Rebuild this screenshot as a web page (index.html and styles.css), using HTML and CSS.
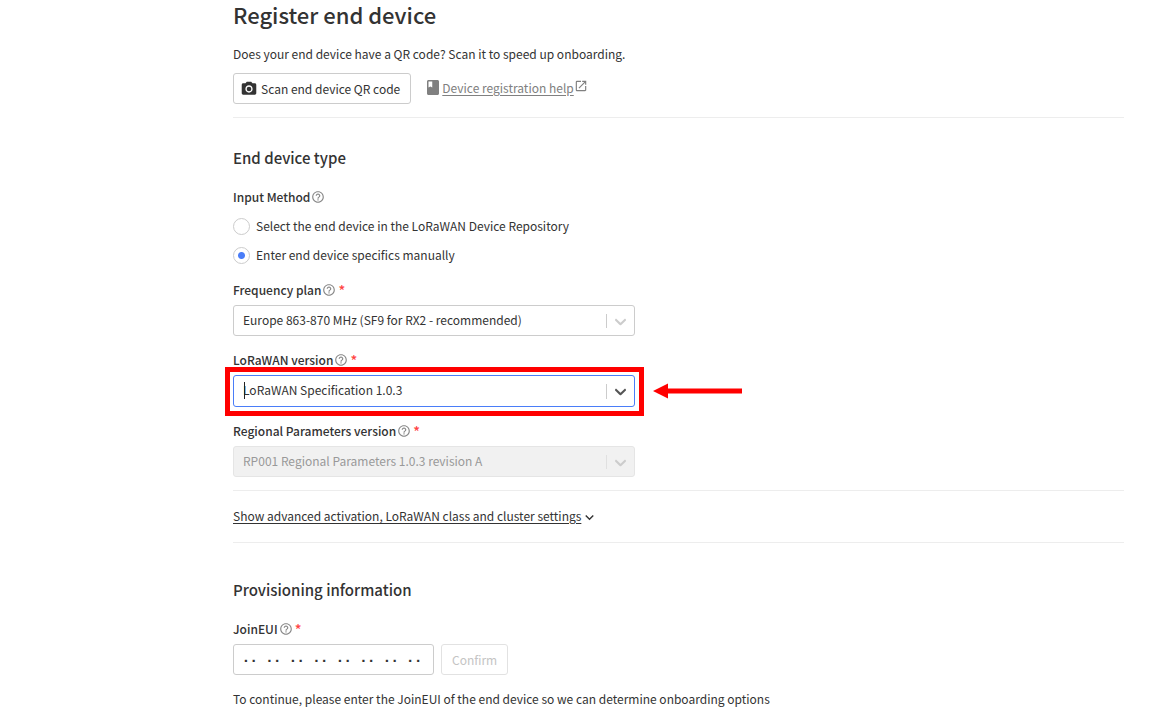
FILE: index.html
```
<!DOCTYPE html>
<html lang="en">
<head>
<meta charset="utf-8">
<title>Register end device</title>
<link rel="stylesheet" href="styles.css">
</head>
<body>
<svg class="defs" aria-hidden="true">
  <symbol id="help" viewBox="0 0 24 24"><path d="M11 18h2v-2h-2v2zm1-16C6.480 2 2 6.480 2 12s4.480 10 10 10 10-4.480 10-10S17.520 2 12 2zm0 18c-4.410 0-8-3.590-8-8s3.590-8 8-8 8 3.590 8 8-3.590 8-8 8zm0-14c-2.210 0-4 1.790-4 4h2c0-1.100.9-2 2-2s2 .9 2 2c0 2-3 1.750-3 5h2c0-2.250 3-2.500 3-5 0-2.210-1.790-4-4-4z"/></symbol>
  <symbol id="chevron" viewBox="0 0 20 20"><path d="M4.516 7.548c.436-.446 1.043-.481 1.576 0L10 11.295l3.908-3.747c.533-.481 1.141-.446 1.574 0 .436.445.408 1.197 0 1.615-.406.418-4.695 4.502-4.695 4.502a1.095 1.095 0 0 1-1.576 0S4.924 9.581 4.516 9.163s-.436-1.170 0-1.615z"/></symbol>
</svg>
<main class="page">
  <header class="intro">
    <h1 class="title">Register end device</h1>
    <p class="text">Does your end device have a QR code? Scan it to speed up onboarding.</p>
    <div class="actions">
      <button class="button" type="button">
        <svg class="icon-camera" viewBox="1 1 22 22" aria-hidden="true"><circle cx="12" cy="12" r="3.200"/><path d="M9 2 7.170 4H4c-1.100 0-2 .9-2 2v12c0 1.100.9 2 2 2h16c1.100 0 2-.9 2-2V6c0-1.100-.9-2-2-2h-3.170L15 2H9zm3 15c-2.760 0-5-2.240-5-5s2.240-5 5-5 5 2.240 5 5-2.240 5-5 5z"/></svg>
        Scan end device QR code
      </button>
      <span class="help-link">
        <svg class="icon-book" viewBox="4 2 16 20" aria-hidden="true"><path d="M18 2H6c-1.100 0-2 .9-2 2v16c0 1.100.9 2 2 2h12c1.100 0 2-.9 2-2V4c0-1.100-.9-2-2-2zM6 4h5v8l-2.500-1.500L6 12V4z"/></svg>
        <a href="#help">Device registration help</a>
        <svg class="icon-external" viewBox="0 0 24 24" aria-hidden="true"><path d="M19 19H5V5h7V3H5a2 2 0 0 0-2 2v14a2 2 0 0 0 2 2h14c1.100 0 2-.9 2-2v-7h-2v7zM14 3v2h3.590l-9.830 9.830 1.410 1.410L19 6.410V10h2V3h-7z"/></svg>
      </span>
    </div>
  </header>

  <form class="form">
    <section class="section">
      <h2 class="heading">End device type</h2>
      <fieldset class="radios">
        <legend class="label">Input Method<svg class="icon-help"><use href="#help"/></svg></legend>
        <label class="radio"><input type="radio" name="method">Select the end device in the LoRaWAN Device Repository</label>
        <label class="radio"><input type="radio" name="method" checked>Enter end device specifics manually</label>
      </fieldset>
      <div class="field">
        <label class="label" for="plan">Frequency plan<svg class="icon-help"><use href="#help"/></svg><span class="required">*</span></label>
        <div class="select">
          <select id="plan"><option>Europe 863-870 MHz (SF9 for RX2 - recommended)</option></select>
          <span class="indicator"><svg><use href="#chevron"/></svg></span>
        </div>
      </div>
      <div class="field">
        <label class="label" for="version">LoRaWAN version<svg class="icon-help"><use href="#help"/></svg><span class="required">*</span></label>
        <div class="select select-active">
          <select id="version"><option>LoRaWAN Specification 1.0.3</option></select>
          <span class="caret"></span>
          <span class="indicator"><svg><use href="#chevron"/></svg></span>
          <span class="highlight"></span>
          <svg class="arrow" viewBox="0 0 89 16" aria-hidden="true"><path d="M0 8 15 0.500V5.500H89V10.500H15V15.500z"/></svg>
        </div>
      </div>
      <div class="field">
        <label class="label" for="params">Regional Parameters version<svg class="icon-help"><use href="#help"/></svg><span class="required">*</span></label>
        <div class="select select-disabled">
          <select id="params" disabled><option>RP001 Regional Parameters 1.0.3 revision A</option></select>
          <span class="indicator"><svg><use href="#chevron"/></svg></span>
        </div>
      </div>
    </section>
    <div class="advanced">
      <button class="toggle" type="button"><span class="toggle-text">Show advanced activation, LoRaWAN class and cluster settings</span><svg class="icon-expand" viewBox="0 0 24 24" aria-hidden="true"><path d="M16.590 8.590 12 13.170 7.410 8.590 6 10l6 6 6-6z"/></svg></button>
    </div>
    <section class="section section-provisioning">
      <h2 class="heading">Provisioning information</h2>
      <div class="field">
        <label class="label" for="eui">JoinEUI<svg class="icon-help"><use href="#help"/></svg><span class="required">*</span></label>
        <div class="eui-row">
          <input class="eui" id="eui" type="text" value="·· ·· ·· ·· ·· ·· ·· ··">
          <button class="button" type="button" disabled>Confirm</button>
        </div>
      </div>
      <p class="text">To continue, please enter the JoinEUI of the end device so we can determine onboarding options</p>
    </section>
  </form>
</main>
</body>
</html>
```
FILE: styles.css
```
* { box-sizing: border-box; }
body {
  margin: 0;
  background: #fff;
  color: #333;
  font-family: "Noto Sans CJK SC", "Noto Sans", sans-serif;
  font-size: 12px;
  line-height: 20px;
}
h1, h2, p, fieldset, legend { margin: 0; padding: 0; border: 0; }
button, input, select { font: inherit; color: inherit; margin: 0; }
svg { fill: currentColor; flex: none; }
.defs { display: none; }
.page { padding: 0 32px 0 233px; }
.intro { padding-bottom: 13px; border-bottom: 1px solid #ededed; }
.title { font-size: 22px; line-height: 28px; font-weight: 500; margin-bottom: 16px; }
.actions { display: flex; align-items: center; gap: 16px; margin-top: 9px; }
.button {
  display: flex;
  align-items: center;
  gap: 4px;
  height: 31px;
  padding: 0 10px 0 7px;
  background: #fff;
  border: 1px solid #ccc;
  border-radius: 3px;
}
.button:disabled { color: #c4c4c4; border-color: #e2e2e2; padding: 0 10px; }
.icon-camera { width: 16px; height: 16px; }
.help-link { display: flex; align-items: center; color: #808080; padding-bottom: 2px; }
.help-link a { color: inherit; text-underline-offset: 2px; }
.icon-book { width: 12px; height: 15px; margin-right: 3px; }
.icon-external { width: 14px; height: 14px; margin-bottom: 4px; }
.section { padding: 28px 0 13px; }
.section-provisioning { padding-top: 35px; }
.heading { font-size: 15px; line-height: 24px; font-weight: 500; margin-bottom: 17px; }
.label { display: flex; align-items: center; font-weight: 500; line-height: 20px; }
.icon-help { width: 14px; height: 14px; margin-left: 1px; color: #888; }
.required { color: #f44; font-size: 14px; margin-left: 2px; }
.radio { display: flex; align-items: center; gap: 6px; height: 20px; margin-top: 9px; }
.radio input {
  appearance: none;
  width: 17px;
  height: 17px;
  border: 1px solid #ccc;
  border-radius: 50%;
}
.radio input:checked { background: radial-gradient(circle, #4a7df8 3px, #fff 4px); }
.field { margin-top: 15px; }
.select { position: relative; width: 402px; margin-top: 5px; }
.select select {
  display: block;
  appearance: none;
  width: 100%;
  height: 31px;
  padding: 0 40px 2px 9px;
  background: #fff;
  border: 1px solid #ccc;
  border-radius: 3px;
}
.select select:disabled { background: #f1f1f1; border-color: #e5e5e5; color: #999; opacity: 1; }
.select-active select { border-color: #4a7df8; height: 32px; }
.indicator {
  position: absolute;
  right: 5px;
  top: 9px;
  bottom: 8px;
  display: flex;
  align-items: center;
  padding-left: 4px;
  border-left: 1px solid #ccc;
  color: #ccc;
  pointer-events: none;
}
.indicator svg { width: 19px; height: 19px; }
.select-active .indicator { color: #555; }
.select-disabled .indicator { border-color: #e0e0e0; }
.caret { position: absolute; left: 11px; top: 7px; width: 1px; height: 17px; background: #222; }
.highlight { position: absolute; inset: -8px -9px -9px -8px; border: 5px solid #f00; pointer-events: none; }
.arrow { position: absolute; left: 420px; top: 8px; width: 89px; height: 16px; color: #f00; }
.field + .field { margin-top: 14px; }
.advanced { padding: 15px 0 16px; border: solid #ededed; border-width: 1px 0; }
.toggle { display: flex; align-items: center; padding: 0; border: 0; background: none; }
.toggle-text { text-decoration: underline; text-underline-offset: 2px; }
.icon-expand { width: 17px; height: 17px; margin-top: 2px; }
.eui-row { display: flex; gap: 7px; margin-top: 5px; }
.eui {
  width: 201px;
  height: 31px;
  padding: 2px 8px 0;
  border: 1px solid #ccc;
  border-radius: 3px;
  font-family: "DejaVu Sans Mono", monospace;
  font-size: 13px;
  font-weight: 700;
}
.field + .text { margin-top: 14px; }
```
